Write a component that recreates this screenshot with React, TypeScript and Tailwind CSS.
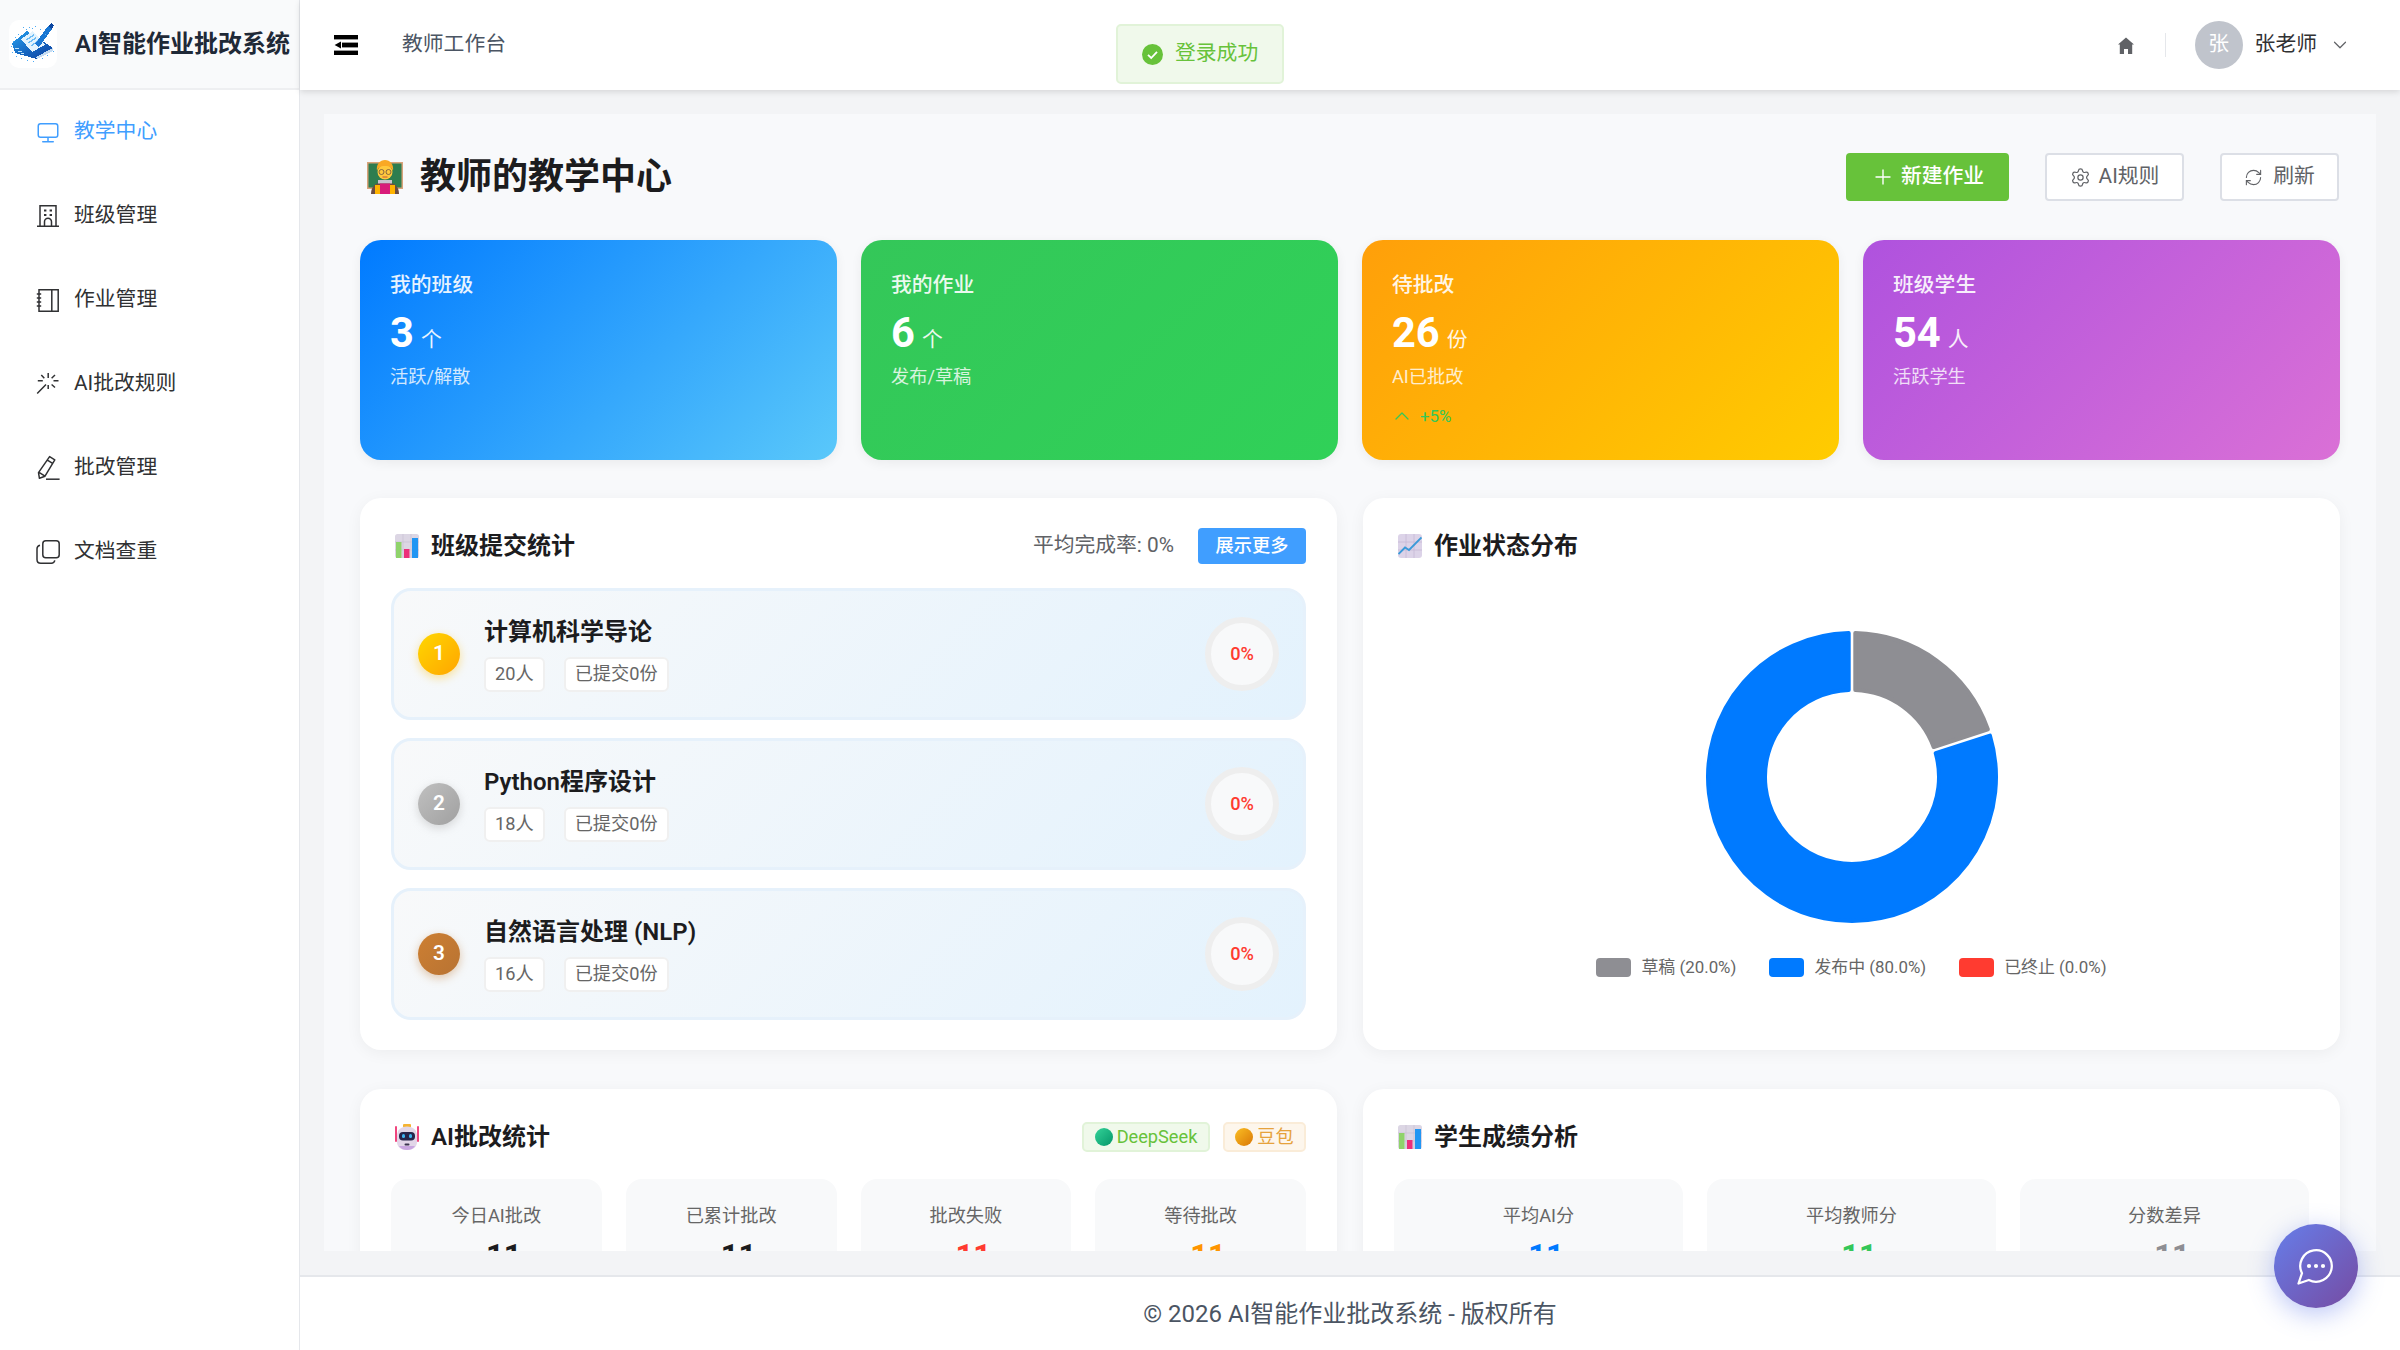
import React from "react";
import { Settings, RefreshCw, Plus, ChevronDown, ChevronUp } from "lucide-react";

const ink = "currentColor";

function MonitorIcon() {
  return (
    <svg width="24" height="24" viewBox="0 0 1024 1024" fill={ink}>
      <path d="M544 768v128h192a32 32 0 1 1 0 64H288a32 32 0 1 1 0-64h192V768H192A128 128 0 0 1 64 640V256a128 128 0 0 1 128-128h640a128 128 0 0 1 128 128v384a128 128 0 0 1-128 128zM192 192a64 64 0 0 0-64 64v384a64 64 0 0 0 64 64h640a64 64 0 0 0 64-64V256a64 64 0 0 0-64-64z" />
    </svg>
  );
}
function BuildingIcon() {
  return (
    <svg width="24" height="24" viewBox="0 0 24 24" fill="none" stroke={ink} strokeWidth="1.5">
      <path d="M4 22V1.8h16V22M1 22.2h22" />
      <path d="M8 6.5h2.4M13.6 6.5H16M8 11h2.4M13.6 11H16" strokeWidth="2" />
      <path d="M8.5 22v-4.2a3.5 3.5 0 0 1 7 0V22" />
    </svg>
  );
}
function NotebookIcon() {
  return (
    <svg width="24" height="24" viewBox="0 0 24 24" fill="none" stroke={ink} strokeWidth="1.5">
      <path d="M3 1.8h19.2v21.4H3zM15.8 1.8v21.4" />
      <path d="M0.8 6h4.4M0.8 10h4.4M0.8 14h4.4M0.8 18h4.4" />
    </svg>
  );
}
function MagicIcon() {
  return (
    <svg width="24" height="24" viewBox="0 0 24 24" fill="none" stroke={ink} strokeWidth="1.5">
      <path d="M12.2 1v5M12.2 13v4M1.8 8.8h5M17.5 8.8h5M19 3l-3.4 3.2M5.3 3l3 3.2M15.6 12.5l3.4 3M10 12.5L1.2 21.6" />
    </svg>
  );
}
function PenIcon() {
  return (
    <svg width="24" height="26" viewBox="0 0 24 26" fill="none" stroke={ink} strokeWidth="1.5" strokeLinejoin="round">
      <path d="M13.6 1.6l5.2 3.2-9.8 16.4-5.6 2-.9-5.6zM11.4 5.2l5.2 3.2M3.4 17.6l5.6 3.6" />
      <path d="M10 24.2h13.6" />
    </svg>
  );
}
function CopyIcon() {
  return (
    <svg width="24" height="24" viewBox="0 0 24 24" fill="none" stroke={ink} strokeWidth="1.5">
      <rect x="6.8" y="0.8" width="16.4" height="17" rx="3" />
      <path d="M4 5.2C2 5.6 1 7 1 8.8v10.6c0 2.2 1.6 3.8 3.8 3.8h10.6c1.8 0 3-1 3.4-2.8" />
    </svg>
  );
}

function FoldIcon() {
  return (
    <svg width="24" height="20" viewBox="0 0 24 20" fill="black" className="shrink-0">
      <rect x="0" y="0" width="24" height="4.4" />
      <rect x="8" y="7.6" width="16" height="4.8" />
      <path d="M7 6.4v7.2L0.6 10z" />
      <rect x="0" y="15.6" width="24" height="4.4" />
    </svg>
  );
}
function HomeIcon() {
  return (
    <svg width="20" height="17" viewBox="0 0 20 17" fill="#606266">
      <path d="M10 0.4L18 7.4h-1.8V17h-4.2v-5H8v5H3.800V7.400H2z" />
    </svg>
  );
}
function SuccessIcon() {
  return (
    <svg width="21" height="21" viewBox="0 0 21 21">
      <circle cx="10.500" cy="10.500" r="10.500" fill="#67c23a" />
      <path d="M6 10.800l3.200 3.200L15 7.800" fill="none" stroke="white" strokeWidth="1.800" />
    </svg>
  );
}
function ChatIcon() {
  return (
    <svg width="42" height="42" viewBox="0 0 24 24" fill="none" stroke="white" strokeWidth="1.300" strokeLinejoin="round">
      <path d="M7.900 20A9 9 0 1 0 4 16.100L2 22Z" />
      <circle cx="8" cy="12" r="1.200" fill="white" stroke="none" />
      <circle cx="12" cy="12" r="1.200" fill="white" stroke="none" />
      <circle cx="16" cy="12" r="1.200" fill="white" stroke="none" />
    </svg>
  );
}

function Logo() {
  const specks = [
    [14, 7], [20, 7], [17, 9], [23, 8], [9, 14], [6, 17], [4, 21], [2, 26], [3, 32], [7, 36], [12, 38], [18, 40],
    [24, 41], [33, 38], [38, 35], [44, 31], [31, 9], [36, 14], [26, 6],
  ];
  return (
    <div className="h-[48px] w-[48px] shrink-0 rounded-[10px] bg-white">
      <svg width="48" height="48" viewBox="0 0 48 48" shapeRendering="crispEdges">
        <defs>
          <linearGradient id="logoBook" x1="0" y1="0" x2="1" y2="1">
            <stop offset="0" stopColor="#29a3ef" />
            <stop offset="0.55" stopColor="#1565c0" />
            <stop offset="1" stopColor="#0d3f9e" />
          </linearGradient>
        </defs>
        <path d="M3 23L18 11L44 28L28 39L6 33Z" fill="url(#logoBook)" />
        <path d="M27 37L44 28L44 31L28 39Z" fill="#c5dcf2" />
        <path d="M12 19L24 11L36 25L23 32Z" fill="#e3f3fd" />
        <path d="M17 20L25 15M19 23L27 18M22 26L29 21" stroke="#6fbdf5" strokeWidth="1.400" fill="none" />
        <path d="M26 24L30 27L43 9L39 6Z" fill="#1976d2" />
        <path d="M39 6L43 9L45 5L42 3Z" fill="#0d47a1" />
        <path d="M6 28h4M9 31h4M12 33h3" stroke="#bfe3fb" strokeWidth="1" fill="none" />
        <g fill="#4dabf5">
          {specks.map(([x, y]) => (
            <rect key={`${x}-${y}`} x={x} y={y} width="1" height="1" />
          ))}
        </g>
      </svg>
    </div>
  );
}

function TeacherEmoji() {
  return (
    <svg width="36" height="34" viewBox="0 0 36 34" className="shrink-0">
      <rect x="0" y="2" width="36" height="27" fill="#d9a37a" />
      <rect x="1.500" y="3.500" width="33" height="24" fill="#2e7d4f" />
      <path d="M4 34c0-8 5-12 14-12s14 4 14 12z" fill="#6d4c41" />
      <rect x="11" y="20" width="14" height="3.500" fill="#c9c3cf" />
      <rect x="13" y="23.500" width="10" height="10.500" fill="#d81b7a" />
      <rect x="8" y="25" width="5" height="9" fill="#ffb300" />
      <rect x="23" y="25" width="5" height="9" fill="#ffb300" />
      <circle cx="18" cy="12" r="7.500" fill="#ffc83d" />
      <path d="M10 11C9 4 13 0 18 0s9 4 8 11c-1-3-3-5-8-5s-7 2-8 5z" fill="#f9a825" />
      <circle cx="14.500" cy="12" r="2.500" fill="none" stroke="#7a5c3e" strokeWidth="0.900" />
      <circle cx="21.500" cy="12" r="2.500" fill="none" stroke="#7a5c3e" strokeWidth="0.900" />
      <path d="M15.500 17h5" stroke="#c2553a" strokeWidth="1" />
    </svg>
  );
}
function BarEmoji() {
  return (
    <svg width="24" height="24" viewBox="0 0 24 24" className="shrink-0">
      <rect x="0" y="0" width="24" height="24" rx="2.500" fill="#dcd6e4" />
      <path d="M8 0v24M16 0v24M0 8h24M0 16h24" stroke="#c9c2d4" strokeWidth="0.700" />
      <rect x="1" y="8" width="5.500" height="16" fill="#8fd36b" />
      <rect x="9" y="15" width="5.500" height="9" fill="#ec2f7a" />
      <rect x="17" y="4" width="6" height="20" fill="#2196f3" />
    </svg>
  );
}
function LineEmoji() {
  return (
    <svg width="24" height="24" viewBox="0 0 24 24" className="shrink-0">
      <rect x="0" y="0" width="24" height="24" rx="3" fill="#dcd3e8" />
      <path d="M8 0v24M16 0v24M0 8h24M0 16h24" stroke="#c5bad6" strokeWidth="0.800" />
      <path d="M0.500 20L7 13.500L11 16L23.500 3.500" fill="none" stroke="#3a9ad9" strokeWidth="1.800" />
    </svg>
  );
}
function RobotEmoji() {
  return (
    <svg width="24" height="26" viewBox="0 0 24 26" className="shrink-0">
      <rect x="0" y="2" width="2" height="16" rx="1" fill="#f0457e" />
      <rect x="22" y="2" width="2" height="16" rx="1" fill="#f0457e" />
      <rect x="8" y="0" width="8" height="3.500" rx="1" fill="#f5b331" />
      <path d="M2 12c0-6 4-9.500 10-9.500s10 3.500 10 9.500v6c0 5-4 8-10 8s-10-3-10-8z" fill="#e2d6e8" />
      <path d="M4 22c2 3 5 4 8 4s6-1 8-4z" fill="#c9a6e0" />
      <rect x="4" y="8" width="16" height="8.500" rx="4" fill="#28244a" />
      <rect x="7" y="10" width="3" height="4" rx="1.500" fill="#3fb4f0" />
      <rect x="14" y="10" width="3" height="4" rx="1.500" fill="#3fb4f0" />
      <rect x="9.500" y="19.500" width="5" height="2" rx="1" fill="#3c3450" />
    </svg>
  );
}

function polar(r: number, deg: number) {
  const a = ((deg - 90) * Math.PI) / 180;
  return `${(150 + r * Math.cos(a)).toFixed(2)} ${(150 + r * Math.sin(a)).toFixed(2)}`;
}
function sector(a0: number, a1: number) {
  const R = 144;
  const r = 87;
  const inset = 3.3;
  const deg = (d: number, rad: number) => ((d / rad) * 180) / Math.PI;
  const large = a1 - a0 > 180 ? 1 : 0;
  return [
    `M${polar(R, a0 + deg(inset, R))}`,
    `A${R} ${R} 0 ${large} 1 ${polar(R, a1 - deg(inset, R))}`,
    `L${polar(r, a1 - deg(inset, r))}`,
    `A${r} ${r} 0 ${large} 0 ${polar(r, a0 + deg(inset, r))}`,
    "Z",
  ].join(" ");
}
function Donut() {
  return (
    <svg width="300" height="300" viewBox="0 0 300 300" className="block">
      <path d={sector(72, 360)} fill="#007aff" stroke="#007aff" strokeWidth="4" strokeLinejoin="round" />
      <path d={sector(0, 72)} fill="#8e8e93" stroke="#8e8e93" strokeWidth="4" strokeLinejoin="round" />
    </svg>
  );
}

const menu = [
  { label: "教学中心", icon: <MonitorIcon />, active: true },
  { label: "班级管理", icon: <BuildingIcon /> },
  { label: "作业管理", icon: <NotebookIcon /> },
  { label: "AI批改规则", icon: <MagicIcon /> },
  { label: "批改管理", icon: <PenIcon /> },
  { label: "文档查重", icon: <CopyIcon /> },
];

const stats = [
  { title: "我的班级", value: "3", unit: "个", desc: "活跃/解散", cls: "bg-[linear-gradient(135deg,#007aff,#5ac8fa)]" },
  { title: "我的作业", value: "6", unit: "个", desc: "发布/草稿", cls: "bg-[linear-gradient(135deg,#34c759,#30d158)]" },
  { title: "待批改", value: "26", unit: "份", desc: "AI已批改", trend: "+5%", cls: "bg-[linear-gradient(135deg,#ff9f0a,#ffcc00)]" },
  { title: "班级学生", value: "54", unit: "人", desc: "活跃学生", cls: "bg-[linear-gradient(135deg,#af52de,#da70d6)]" },
];

const classes = [
  { rank: "1", name: "计算机科学导论", count: "20人", cls: "bg-[linear-gradient(135deg,#ffd700,#ffa500)]", glow: "shadow-[0_3px_10px_rgba(255,190,0,0.4)]" },
  { rank: "2", name: "Python程序设计", count: "18人", cls: "bg-[linear-gradient(135deg,#c0c0c0,#a0a0a0)]", glow: "shadow-[0_3px_10px_rgba(160,160,160,0.4)]" },
  { rank: "3", name: "自然语言处理 (NLP)", count: "16人", cls: "bg-[linear-gradient(135deg,#cd7f32,#b87333)]", glow: "shadow-[0_3px_10px_rgba(190,120,50,0.4)]" },
];

const aiBoxes = [
  { label: "今日AI批改", value: "11", cls: "text-[#1c1c1e]" },
  { label: "已累计批改", value: "11", cls: "text-[#1c1c1e]" },
  { label: "批改失败", value: "11", cls: "text-[#ff3b30]" },
  { label: "等待批改", value: "11", cls: "text-[#ff9500]" },
];
const scoreBoxes = [
  { label: "平均AI分", value: "11", cls: "text-[#007aff]" },
  { label: "平均教师分", value: "11", cls: "text-[#34c759]" },
  { label: "分数差异", value: "11", cls: "text-[#8e8e93]" },
];

function Card({ children }: { children: React.ReactNode }) {
  return (
    <div className="rounded-[21px] bg-white px-[31px] pt-[30px] pb-[30px] shadow-[0_3px_16px_rgba(0,0,0,0.05)]">
      {children}
    </div>
  );
}

function CardHeader({ icon, title, children }: { icon: React.ReactNode; title: string; children?: React.ReactNode }) {
  return (
    <div className="mb-[24px] flex h-[36px] items-center justify-between pl-[4px]">
      <div className="flex items-center gap-[12px]">
        {icon}
        <span className="text-[24px] font-semibold text-[#1c1c1e]">{title}</span>
      </div>
      {children}
    </div>
  );
}

function MiniBox({ label, value, cls }: { label: string; value: string; cls: string }) {
  return (
    <div className="h-[200px] rounded-[16px] bg-[#f8f9fa] pt-[25px] text-center">
      <div className="text-[18.2px] leading-[24px] text-[#666666]">{label}</div>
      <div className={`mt-[8px] pl-[15px] text-[31px] leading-[40px] font-bold ${cls}`}>{value}</div>
    </div>
  );
}

export default function App() {
  return (
    <div className="relative flex h-[1350px] w-[2400px] overflow-hidden bg-[#f3f4f6] font-['Roboto','Noto_Sans_CJK_SC',sans-serif]">
      <aside className="flex w-[300px] shrink-0 flex-col border-r border-[#e5e7eb] bg-white">
        <div className="flex h-[90px] items-center gap-[18px] border-b-2 border-[#eeeff1] bg-[#f9fafb] pl-[9px]">
          <Logo />
          <span className="text-[24px] font-semibold whitespace-nowrap text-[#1f2937]">AI智能作业批改系统</span>
        </div>
        <nav className="flex flex-col">
          {menu.map((m) => (
            <div
              key={m.label}
              className={`flex h-[84px] items-center gap-[14px] pl-[36px] text-[20.8px] ${m.active ? "text-[#409eff]" : "text-[#303133]"}`}
            >
              <span className="flex w-[24px] justify-center">{m.icon}</span>
              <span>{m.label}</span>
            </div>
          ))}
        </nav>
      </aside>

      <div className="flex min-w-0 flex-1 flex-col">
        <header className="relative z-10 flex h-[90px] shrink-0 items-center justify-between bg-white pr-[49px] pl-[34px] shadow-[0_2px_6px_rgba(0,0,0,0.12)]">
          <div className="flex items-center gap-[44px]">
            <FoldIcon />
            <span className="text-[20.8px] text-[#4b5563]">教师工作台</span>
          </div>
          <div className="flex items-center">
            <HomeIcon />
            <div className="mx-[29px] h-[24px] w-px bg-[#e5e7eb]" />
            <div className="flex h-[48px] w-[48px] items-center justify-center rounded-full bg-[#c0c4cc] text-[20.8px] text-white">张</div>
            <span className="ml-[12px] text-[20.8px] text-[#303133]">张老师</span>
            <ChevronDown size={22} strokeWidth={1.3} className="ml-[12px] text-[#606266]" />
          </div>
        </header>

        <div className="min-h-0 flex-1 p-[24px]">
          <div className="h-full overflow-hidden bg-[#f8f9fb] px-[36px] pt-[39px]">
            <div className="mb-[39px] flex h-[48px] items-center justify-between">
              <div className="flex items-center gap-[17px] pl-[7px]">
                <TeacherEmoji />
                <h1 className="text-[36px] font-semibold text-[#1c1c1e]">教师的教学中心</h1>
              </div>
              <div className="flex items-center gap-[36px] pr-[1px]">
                <button className="flex h-[48px] w-[163px] items-center justify-center gap-[6px] rounded-[4px] bg-[#67c23a] text-[20.8px] font-medium text-white">
                  <Plus size={24} strokeWidth={1.4} />
                  新建作业
                </button>
                <button className="flex h-[48px] w-[139px] items-center justify-center gap-[8px] rounded-[4px] border-2 border-[#dcdfe6] bg-white text-[20.8px] text-[#606266]">
                  <Settings size={21} strokeWidth={1.4} />
                  AI规则
                </button>
                <button className="flex h-[48px] w-[119px] items-center justify-center gap-[10px] rounded-[4px] border-2 border-[#dcdfe6] bg-white text-[20.8px] text-[#606266]">
                  <RefreshCw size={19} strokeWidth={1.4} />
                  刷新
                </button>
              </div>
            </div>

            <div className="mb-[38px] grid grid-cols-4 gap-[24px]">
              {stats.map((s) => (
                <div
                  key={s.title}
                  className={`h-[220px] rounded-[21px] pt-[15px] pl-[30px] text-white shadow-[0_3px_12px_rgba(0,0,0,0.06)] ${s.cls}`}
                >
                  <div className="mt-[16px] text-[20.8px] leading-[28px] font-medium opacity-90">{s.title}</div>
                  <div className="mt-[9px] flex h-[50px] items-baseline">
                    <span className="text-[41.6px] leading-[50px] font-bold">{s.value}</span>
                    <span className="ml-[7px] text-[20.8px] opacity-90">{s.unit}</span>
                  </div>
                  <div className="mt-[7px] text-[18.2px] leading-[24px] opacity-80">{s.desc}</div>
                  {s.trend && (
                    <div className="mt-[15px] flex items-center gap-[6px] text-[16.9px] leading-[24px] text-[#34c759]">
                      <ChevronUp size={24} strokeWidth={1.3} className="-ml-[2px]" />
                      {s.trend}
                    </div>
                  )}
                </div>
              ))}
            </div>

            <div className="mb-[39px] grid grid-cols-2 gap-[26px]">
              <Card>
                <CardHeader icon={<BarEmoji />} title="班级提交统计">
                  <div className="flex items-center gap-[24px]">
                    <span className="text-[20.8px] text-[#606266]">平均完成率: 0%</span>
                    <button className="flex h-[36px] w-[108px] items-center justify-center rounded-[4px] bg-[#409eff] text-[18.2px] font-medium text-white">展示更多</button>
                  </div>
                </CardHeader>
                <div className="flex flex-col gap-[18px]">
                  {classes.map((c) => (
                    <div
                      key={c.rank}
                      className="flex h-[132px] items-center rounded-[20px] border-[3px] border-[#e6f1fb] bg-[linear-gradient(135deg,#f8f9fa,#e3f2fd)] pr-[24px] pl-[24px]"
                    >
                      <div className={`flex h-[42px] w-[42px] shrink-0 items-center justify-center rounded-full text-[20.8px] font-semibold text-white ${c.cls} ${c.glow}`}>
                        {c.rank}
                      </div>
                      <div className="ml-[24px] min-w-0 flex-1">
                        <div className="-mt-[1px] text-[24px] leading-[32px] font-semibold text-[#1c1c1e]">{c.name}</div>
                        <div className="mt-[9px] flex gap-[19px]">
                          <span className="flex h-[35px] items-center rounded-[6px] border-2 border-[#f0f0f0] bg-white px-[9px] text-[18.2px] text-[#666666]">{c.count}</span>
                          <span className="flex h-[35px] items-center rounded-[6px] border-2 border-[#f0f0f0] bg-white px-[9px] text-[18.2px] text-[#666666]">已提交0份</span>
                        </div>
                      </div>
                      <div className="flex h-[74px] w-[74px] shrink-0 items-center justify-center rounded-full border-[6px] border-[#eeeeee] bg-[#f8f9fa] text-[18.2px] font-medium text-[#ff3b30]">0%</div>
                    </div>
                  ))}
                </div>
              </Card>

              <Card>
                <CardHeader icon={<LineEmoji />} title="作业状态分布" />
                <div className="mt-[63px] flex flex-col items-center">
                  <Donut />
                  <div className="mt-[28px] flex items-center justify-center gap-[33px] text-[16.9px] text-[#666666]">
                    <div className="flex items-center gap-[10px]">
                      <span className="h-[19px] w-[35px] rounded-[4px] bg-[#8e8e93]" />
                      草稿 (20.0%)
                    </div>
                    <div className="flex items-center gap-[10px]">
                      <span className="h-[19px] w-[35px] rounded-[4px] bg-[#007aff]" />
                      发布中 (80.0%)
                    </div>
                    <div className="flex items-center gap-[10px]">
                      <span className="h-[19px] w-[35px] rounded-[4px] bg-[#ff3b30]" />
                      已终止 (0.0%)
                    </div>
                  </div>
                </div>
              </Card>
            </div>

            <div className="grid grid-cols-2 gap-[26px]">
              <Card>
                <CardHeader icon={<RobotEmoji />} title="AI批改统计">
                  <div className="flex items-center gap-[13px]">
                    <span className="flex h-[30px] w-[128px] items-center justify-center gap-[4px] rounded-[5px] border-2 border-[#e1f3d8] bg-[#f0f9eb] text-[18.2px] text-[#67c23a]">
                      <span className="h-[18px] w-[18px] rounded-full bg-[linear-gradient(135deg,#34d399,#059669)]" />
                      DeepSeek
                    </span>
                    <span className="flex h-[30px] w-[83px] items-center justify-center gap-[4px] rounded-[5px] border-2 border-[#faecd8] bg-[#fdf6ec] text-[18.2px] text-[#e6a23c]">
                      <span className="h-[18px] w-[18px] rounded-full bg-[linear-gradient(135deg,#fbbf24,#d97706)]" />
                      豆包
                    </span>
                  </div>
                </CardHeader>
                <div className="grid grid-cols-4 gap-[24px]">
                  {aiBoxes.map((b) => (
                    <MiniBox key={b.label} {...b} />
                  ))}
                </div>
              </Card>
              <Card>
                <CardHeader icon={<BarEmoji />} title="学生成绩分析" />
                <div className="grid grid-cols-3 gap-[24px]">
                  {scoreBoxes.map((b) => (
                    <MiniBox key={b.label} {...b} />
                  ))}
                </div>
              </Card>
            </div>
          </div>
        </div>

        <footer className="flex h-[75px] shrink-0 items-center justify-center border-t-2 border-[#e5e7eb] bg-white text-[24px] text-[#4b5563]">
          © 2026 AI智能作业批改系统 - 版权所有
        </footer>
      </div>

      <div className="absolute top-[24px] left-[1116px] z-20 flex h-[60px] w-[168px] items-center gap-[12px] rounded-[5px] border-2 border-[#e1f3d8] bg-[#f0f9eb] pl-[24px] text-[20.8px] text-[#67c23a]">
        <SuccessIcon />
        登录成功
      </div>

      <div className="absolute top-[1224px] left-[2274px] z-20 flex h-[84px] w-[84px] items-center justify-center rounded-full bg-[linear-gradient(135deg,#667eea,#764ba2)] shadow-[0_6px_26px_rgba(102,126,234,0.45)]">
        <ChatIcon />
      </div>
    </div>
  );
}
